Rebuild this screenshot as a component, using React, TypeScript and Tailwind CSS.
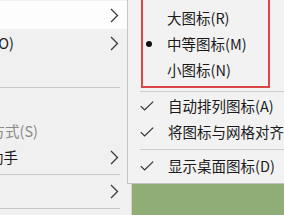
import type { ReactNode } from 'react';

const FONT = { fontFamily: '"Noto Sans CJK SC", "Noto Sans", sans-serif' };

function Chevron() {
  return (
    <svg width="9" height="15" viewBox="0 0 9 15" className="shrink-0">
      <path d="M1 1 L7.5 7.5 L1 14" fill="none" stroke="#3a3a3a" strokeWidth="1.3" />
    </svg>
  );
}

function Check() {
  return (
    <svg width="14" height="10" viewBox="0 0 14 10" className="shrink-0">
      <path d="M0.8 5.2 L4.6 9 L13.2 0.6" fill="none" stroke="#333" strokeWidth="1.2" />
    </svg>
  );
}

// left menu: text is anchored at its right end, the start runs off the page
function LeftRow({
  h,
  end,
  text,
  gray,
  arrow,
  hover,
}: {
  h: string;
  end: string;
  text?: string;
  gray?: boolean;
  arrow?: boolean;
  hover?: boolean;
}) {
  return (
    <div className={`${h} flex items-center ${hover ? 'bg-[#fdfdfd]' : ''}`}>
      <div className={`${end} flex justify-end whitespace-nowrap text-[14.5px] ${gray ? 'text-[#8a8a8a]' : 'text-[#1b1b1b]'}`}>
        {text}
      </div>
      {arrow && (
        <div className="ml-auto mr-[12px] flex">
          <Chevron />
        </div>
      )}
    </div>
  );
}

function LeftSep({ h }: { h: string }) {
  return (
    <div className={`${h} flex items-center`}>
      <div className="h-px w-[120px] bg-[#c6c6c6]" />
    </div>
  );
}

function SubRow({ mark, children }: { mark?: ReactNode; children: ReactNode }) {
  return (
    <div className="h-[26px] flex items-center">
      <div className="w-[28px] flex items-center">{mark}</div>
      <span className="whitespace-nowrap text-[14.5px] text-[#1b1b1b]">{children}</span>
    </div>
  );
}

export default function App() {
  return (
    <div className="relative w-[284px] h-[215px] overflow-hidden bg-[#8fad75] flex" style={FONT}>
      <div className="w-[132px] h-full flex flex-col bg-[#f0f0f0] border-r border-[#d2d2d2] pt-px">
        <LeftRow h="h-[28px]" end="w-[14px]" hover arrow />
        <LeftRow h="h-[28px]" end="w-[14px]" text="排序方式(O)" arrow />
        <LeftRow h="h-[26px]" end="w-[14px]" />
        <LeftSep h="h-[9px]" />
        <LeftRow h="h-[26px]" end="w-[14px]" />
        <LeftRow h="h-[26px]" end="w-[38px]" text="粘贴快捷方式(S)" gray />
        <LeftRow h="h-[26px]" end="w-[18px]" text="桌面助手" arrow />
        <LeftSep h="h-[8px]" />
        <LeftRow h="h-[26px]" end="w-[14px]" arrow />
        <LeftSep h="h-[9px]" />
      </div>

      <div className="absolute left-[127px] top-0 w-[170px] h-[184px] bg-[#f2f2f2] border-l border-b border-[#c4c4c4] flex flex-col">
        <div className="ml-[13px] w-[129px] -mt-[3px] pt-[6px] pb-[3px] border-2 border-[#dc4548] flex flex-col">
          <div className="h-[26px] flex items-center">
            <div className="w-[24px]" />
            <span className="whitespace-nowrap text-[14.5px] text-[#1b1b1b]">大图标(R)</span>
          </div>
          <div className="h-[26px] flex items-center">
            <div className="w-[24px] flex items-center pl-[3px]">
              <div className="w-[6px] h-[6px] rounded-full bg-[#111]" />
            </div>
            <span className="whitespace-nowrap text-[14.5px] text-[#1b1b1b]">中等图标(M)</span>
          </div>
          <div className="h-[26px] flex items-center">
            <div className="w-[24px]" />
            <span className="whitespace-nowrap text-[14.5px] text-[#1b1b1b]">小图标(N)</span>
          </div>
        </div>
        <div className="h-[4px] flex items-end pl-[12px]">
          <div className="h-px w-full bg-[#cfcfcf]" />
        </div>
        <div className="pl-[12px] pt-[1px]">
          <SubRow mark={<Check />}>自动排列图标(A)</SubRow>
          <SubRow mark={<Check />}>将图标与网格对齐</SubRow>
        </div>
        <div className="h-[8px] flex items-center pl-[12px]">
          <div className="h-px w-full bg-[#cfcfcf]" />
        </div>
        <div className="pl-[12px]">
          <SubRow mark={<Check />}>显示桌面图标(D)</SubRow>
        </div>
      </div>
    </div>
  );
}
